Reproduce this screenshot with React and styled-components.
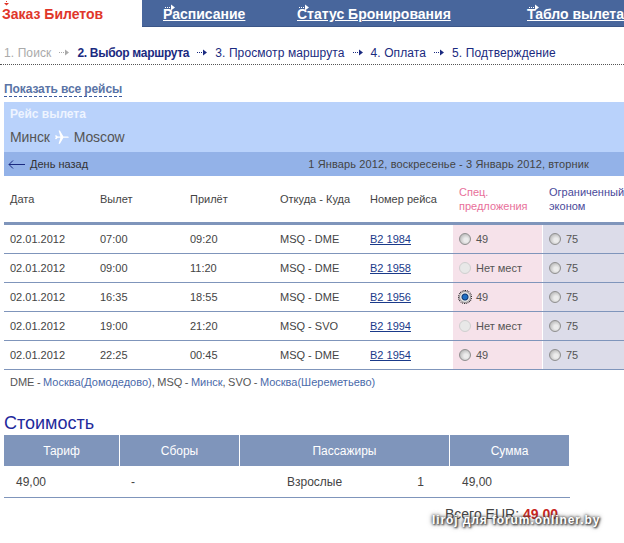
import React from "react";
import styled, { createGlobalStyle } from "styled-components";

const flights = [
  { dep: "07:00", arr: "09:20", route: "MSQ - DME", no: "B2 1984", spec: "49" },
  { dep: "09:00", arr: "11:20", route: "MSQ - DME", no: "B2 1958", spec: null },
  { dep: "16:35", arr: "18:55", route: "MSQ - DME", no: "B2 1956", spec: "49", picked: true },
  { dep: "19:00", arr: "21:20", route: "MSQ - SVO", no: "B2 1994", spec: null },
  { dep: "22:25", arr: "00:45", route: "MSQ - DME", no: "B2 1954", spec: "49" },
];

const steps = ["2. Выбор маршрута", "3. Просмотр маршрута", "4. Оплата", "5. Подтверждение"];

const DotArrow = ({ color = "#1a2a80" }) => (
  <svg width="10" height="7" viewBox="0 0 10 7">
    <path d="M0 3.5h1M2 3.5h1M4 3.5h1" stroke={color} strokeWidth="1" fill="none" />
    <path d="M6 .5l4 3-4 3z" fill={color} />
  </svg>
);

export default function App() {
  return (
    <>
      <GlobalStyle />
      <Page>
        <Nav>
          <ActiveTab>
            <TabMark width="5" height="5" viewBox="0 0 5 5">
              <path d="M2 0h1v1H2zM0 2h5L2.5 4.5z" fill="#e0362a" />
            </TabMark>
            Заказ Билетов
          </ActiveTab>
          <NavBar>
            <NavLink $w={134}><NavArrow><DotArrow color="#fff" /></NavArrow>Расписание</NavLink>
            <NavLink $w={230}><NavArrow><DotArrow color="#fff" /></NavArrow>Статус Бронирования</NavLink>
            <NavLink><NavArrow><DotArrow color="#fff" /></NavArrow>Табло вылета</NavLink>
          </NavBar>
        </Nav>

        <Steps>
          <Step $state="done">1. Поиск</Step>
          <DotArrow color="#aaa" />
          {steps.map((s, i) => (
            <React.Fragment key={s}>
              <Step $state={i === 0 ? "current" : "next"}>{s}</Step>
              {i < steps.length - 1 && <DotArrow />}
            </React.Fragment>
          ))}
        </Steps>

        <ShowAll>Показать все рейсы</ShowAll>

        <RoutePanel>
          <RouteLabel>Рейс вылета</RouteLabel>
          <RouteCities>
            Минск
            <svg width="14" height="14" viewBox="0 0 14 14">
              <path d="M0 5.5l1.2-.3 1.6 1.4 2.6 0L3.6 0.6h1.3l3.5 6h3.6c1 0 1.8.2 1.8.6s-.8.6-1.8.6H8.4l-3.5 6H3.6l1.8-6-2.6 0-1.6 1.4L0 8.9l.8-1.7z" fill="#fff" />
            </svg>
            Moscow
          </RouteCities>
        </RoutePanel>
        <DateBar>
          <BackDay>
            <svg width="17" height="9" viewBox="0 0 17 9">
              <path d="M17 4.5H1M5 .5l-4 4 4 4" stroke="#1a2a80" strokeWidth="1" fill="none" />
            </svg>
            День назад
          </BackDay>
          <DateRange>1 Январь 2012, воскресенье - 3 Январь 2012, вторник</DateRange>
        </DateBar>

        <HeadRow>
          <HeadCell>Дата</HeadCell>
          <HeadCell>Вылет</HeadCell>
          <HeadCell>Прилёт</HeadCell>
          <HeadCell>Откуда - Куда</HeadCell>
          <HeadCell>Номер рейса</HeadCell>
          <FareHead $pink>Спец.<br />предложения</FareHead>
          <FareHead>Ограниченный<br />эконом</FareHead>
        </HeadRow>
        {flights.map((f) => (
          <FlightRow key={f.no}>
            <Cell>02.01.2012</Cell>
            <Cell>{f.dep}</Cell>
            <Cell>{f.arr}</Cell>
            <Cell>{f.route}</Cell>
            <Cell><FlightLink>{f.no}</FlightLink></Cell>
            <FareCell $pink>
              <Radio type="radio" readOnly name="spec" checked={!!f.picked} disabled={!f.spec} $picked={f.picked} />
              {f.spec || "Нет мест"}
            </FareCell>
            <FareCell>
              <Radio type="radio" readOnly name="eco" checked={false} />
              75
            </FareCell>
          </FlightRow>
        ))}
        <Legend>
          DME - <a>Москва(Домодедово)</a>, MSQ - <a>Минск</a>, SVO - <a>Москва(Шереметьево)</a>
        </Legend>

        <CostTitle>Стоимость</CostTitle>
        <CostHead>
          <div>Тариф</div>
          <div>Сборы</div>
          <div>Пассажиры</div>
          <div>Сумма</div>
        </CostHead>
        <CostRow>
          <CostFare>49,00</CostFare>
          <CostFee>-</CostFee>
          <CostPax><span>Взрослые</span><span>1</span></CostPax>
          <CostSum>49,00</CostSum>
        </CostRow>
        <Total>Всего EUR: <b>49,00</b></Total>
        <Watermark>liroj для forum.onliner.by</Watermark>
      </Page>
    </>
  );
}

const GlobalStyle = createGlobalStyle`
  html, body {
    margin: 0;
    background: #fff;
  }
`;

const Page = styled.div`
  position: relative;
  width: 624px;
  height: 543px;
  overflow: hidden;
  background: #fff;
  font-family: "Liberation Sans", Arial, sans-serif;
  color: #444;
`;

const Nav = styled.div`
  display: flex;
  height: 27px;
`;

const ActiveTab = styled.div`
  position: relative;
  width: 142px;
  padding: 6px 0 0 2px;
  box-sizing: border-box;
  font-size: 14px;
  line-height: 16px;
  font-weight: bold;
  color: #e0362a;
`;

const TabMark = styled.svg`
  position: absolute;
  left: 4px;
  top: 1px;
`;

const NavBar = styled.div`
  flex: 1;
  display: flex;
  padding-left: 21px;
  background: #48669c;
  box-shadow: inset 0 -1px 0 #3b5688;
  overflow: hidden;
`;

const NavLink = styled.a`
  position: relative;
  flex: none;
  width: ${(p) => (p.$w ? `${p.$w}px` : "auto")};
  white-space: nowrap;
  padding-top: 6px;
  font-size: 14px;
  line-height: 16px;
  font-weight: bold;
  color: #fff;
  text-decoration: underline;
`;

const NavArrow = styled.span`
  position: absolute;
  left: 2px;
  top: -2px;
`;

const Steps = styled.div`
  display: flex;
  align-items: center;
  gap: 8px;
  height: 38px;
  box-sizing: border-box;
  padding: 14px 0 0 4px;
  border-bottom: 1px dotted #555;
  font-size: 12px;
`;

const Step = styled.span`
  color: ${(p) => (p.$state === "done" ? "#aaa" : "#1a2a80")};
  font-weight: ${(p) => (p.$state === "current" ? "bold" : "normal")};
  letter-spacing: ${(p) => (p.$state === "current" ? "-0.3px" : "0.1px")};
`;

const ShowAll = styled.a`
  display: table;
  margin: 17px 0 5px 4px;
  height: 14px;
  line-height: 14px;
  border-bottom: 1px dashed #3a5aa0;
  font-size: 12px;
  font-weight: bold;
  letter-spacing: -0.1px;
  color: #5a74a6;
`;

const RoutePanel = styled.div`
  height: 50px;
  margin-left: 4px;
  padding: 5px 0 0 6px;
  box-sizing: border-box;
  background: #b9d2fb;
`;

const RouteLabel = styled.div`
  font-size: 12px;
  line-height: 14px;
  font-weight: bold;
  color: #eef4ff;
`;

const RouteCities = styled.div`
  display: flex;
  align-items: center;
  gap: 5px;
  margin-top: 8px;
  font-size: 14px;
  line-height: 16px;
  letter-spacing: -0.1px;
  color: #555;
`;

const DateBar = styled.div`
  display: flex;
  align-items: center;
  justify-content: space-between;
  height: 24px;
  margin-left: 4px;
  padding: 0 35px 0 4px;
  background: #93b2e8;
  font-size: 11px;
  color: #333;
`;

const BackDay = styled.span`
  display: flex;
  align-items: center;
  gap: 5px;
`;

const DateRange = styled.span`
  letter-spacing: 0.12px;
  color: #444;
`;

const columns = "90px 90px 90px 90px 83px 90px 81px";

const HeadRow = styled.div`
  display: grid;
  grid-template-columns: ${columns};
  height: 46px;
  border-bottom: 3px solid #7f95bb;
  margin-left: 4px;
  padding-left: 6px;
  align-items: center;
  font-size: 11px;
  line-height: 14px;
`;

const HeadCell = styled.div`
  color: #444;
`;

const FareHead = styled.div`
  padding-left: 6px;
  color: ${(p) => (p.$pink ? "#e8709a" : "#4a4a9a")};
`;

const FlightRow = styled.div`
  display: grid;
  grid-template-columns: ${columns};
  height: 28px;
  margin-left: 4px;
  padding-left: 6px;
  border-bottom: 1px solid #7f95bb;
  align-items: center;
  font-size: 11px;
`;

const Cell = styled.div`
  color: #444;
`;

const FlightLink = styled.a`
  color: #1a3a8a;
  text-decoration: underline;
`;

const FareCell = styled.div`
  display: flex;
  align-items: center;
  gap: 5px;
  align-self: stretch;
  padding-left: 6px;
  color: #555;
  background: ${(p) => (p.$pink ? "#f6e2ea" : "#dcdce9")};
  border-right: ${(p) => (p.$pink ? "1px solid #fff" : "none")};
`;

const Radio = styled.input`
  appearance: none;
  flex: none;
  width: 12px;
  height: 12px;
  margin: 0;
  border-radius: 50%;
  border: 1px solid #8f8f8f;
  background: ${(p) => (p.$picked
    ? "radial-gradient(circle at 50% 50%, #1d6fc4 0 2px, #12386e 3px, #e8e8e8 4px)"
    : "radial-gradient(circle at 60% 60%, #ececec 0 2px, #c0c0c0 6px)")};
  outline: ${(p) => (p.$picked ? "1px dotted #000" : "none")};
  outline-offset: 0;
  &:disabled {
    border-color: #cfcfcf;
    background: #e8e8e8;
  }
`;

const Legend = styled.div`
  margin: 6px 0 0 10px;
  font-size: 11px;
  line-height: 12px;
  color: #555;
  word-spacing: -0.6px;
  a {
    color: #4a6aaa;
  }
`;

const CostTitle = styled.h2`
  margin: 24px 0 0 4px;
  height: 23px;
  font-size: 18px;
  line-height: 22px;
  font-weight: normal;
  color: #1f2a9c;
`;

const costColumns = "115px 120px 210px 120px";

const CostHead = styled.div`
  display: grid;
  grid-template-columns: ${costColumns};
  width: 565px;
  height: 31px;
  margin-left: 4px;
  background: #7f95bb;
  font-size: 12px;
  line-height: 32px;
  text-align: center;
  color: #fff;
  div + div {
    border-left: 1px solid #fff;
  }
`;

const CostRow = styled.div`
  display: grid;
  grid-template-columns: ${costColumns};
  width: 566px;
  height: 31px;
  margin-left: 4px;
  border-bottom: 1px solid #7f95bb;
  font-size: 12px;
  line-height: 32px;
  color: #444;
`;

const CostFare = styled.div`
  padding-left: 12px;
`;

const CostFee = styled.div`
  padding-left: 12px;
`;

const CostPax = styled.div`
  display: flex;
  justify-content: space-between;
  padding: 0 25px 0 48px;
`;

const CostSum = styled.div`
  padding-left: 13px;
`;

const Total = styled.div`
  margin: 8px 0 0 445px;
  font-size: 14px;
  line-height: 16px;
  color: #444;
  b {
    color: #c8261e;
  }
`;

const Watermark = styled.div`
  position: absolute;
  left: 432px;
  top: 513px;
  font-size: 12px;
  line-height: 14px;
  font-weight: bold;
  letter-spacing: 0.9px;
  white-space: nowrap;
  color: #fff;
  text-shadow: 0 0 3px #333, 0 0 5px #555, 1px 1px 2px #333;
`;
